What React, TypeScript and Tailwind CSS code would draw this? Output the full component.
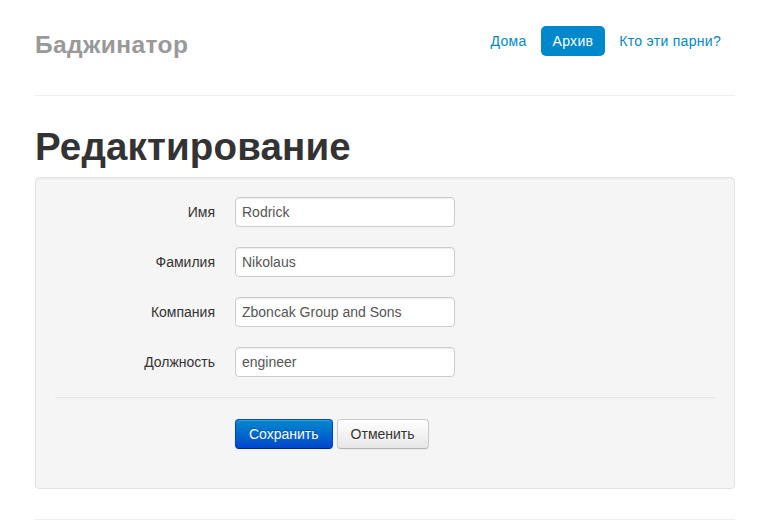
const fields = [
  { label: 'Имя', value: 'Rodrick' },
  { label: 'Фамилия', value: 'Nikolaus' },
  { label: 'Компания', value: 'Zboncak Group and Sons' },
  { label: 'Должность', value: 'engineer' },
];

export default function App() {
  return (
    <div className="min-h-[529px] bg-white text-[14px] leading-[20px] text-[#333] [font-family:'Liberation_Sans',Arial,sans-serif]">
      <div className="ml-[35px] w-[700px] pt-[25px]">
        {/* Masthead */}
        <div className="flex items-start justify-between">
          <h3 className="text-[24.5px] font-bold leading-[40px] tracking-[0.4px] text-[#999]">Баджинатор</h3>
          <ul className="mt-px flex tracking-[0.3px]">
            <li className="mr-[2px]">
              <a href="#" className="block rounded-[5px] px-3 py-2 leading-[14px] text-[#0088cc]">Дома</a>
            </li>
            <li className="mr-[2px]">
              <a href="#" className="block rounded-[5px] bg-[#0088cc] px-3 py-2 leading-[14px] text-white">Архив</a>
            </li>
            <li className="mr-[2px]">
              <a href="#" className="block rounded-[5px] px-3 py-2 leading-[14px] text-[#0088cc]">Кто эти парни?</a>
            </li>
          </ul>
        </div>

        <hr className="mt-[30px] border-0 border-t border-b border-t-[#eee] border-b-white" />

        <h1 className="mt-[30px] text-[38.5px] font-bold leading-[40px] tracking-[0.15px] text-[#333]">Редактирование</h1>

        {/* Form well */}
        <div className="mt-[10px] rounded-[4px] border border-[#e3e3e3] bg-[#f5f5f5] p-[19px] shadow-[inset_0_1px_1px_rgba(0,0,0,0.05)]">
          <form className="flex flex-col">
            {fields.map((f) => (
              <div key={f.label} className="mb-5 flex items-center">
                <label className="w-[160px] text-right">{f.label}</label>
                <input
                  type="text"
                  defaultValue={f.value}
                  className="ml-5 h-[30px] w-[220px] rounded-[4px] border border-[#ccc] bg-white px-[6px] py-1 text-[14px] text-[#555] shadow-[inset_0_1px_1px_rgba(0,0,0,0.075)] outline-none"
                />
              </div>
            ))}
            <div className="flex gap-1 border-t border-[#e5e5e5] pt-[21px] pb-5 pl-[180px]">
              <button
                type="button"
                className="h-[30px] rounded-[4px] border border-[#0044cc] border-b-[#002a80] bg-gradient-to-b from-[#0088cc] to-[#0044cc] px-[13px] text-white [text-shadow:0_-1px_0_rgba(0,0,0,0.25)] shadow-[inset_0_1px_0_rgba(255,255,255,0.2),0_1px_2px_rgba(0,0,0,0.05)]"
              >
                Сохранить
              </button>
              <button
                type="button"
                className="h-[30px] rounded-[4px] border border-[#ccc] border-b-[#b3b3b3] bg-gradient-to-b from-white to-[#e6e6e6] px-[13px] text-[#333] [text-shadow:0_1px_1px_rgba(255,255,255,0.75)] shadow-[inset_0_1px_0_rgba(255,255,255,0.2),0_1px_2px_rgba(0,0,0,0.05)]"
              >
                Отменить
              </button>
            </div>
          </form>
        </div>

        <hr className="mt-[30px] border-0 border-t border-b border-t-[#eee] border-b-white" />
      </div>
    </div>
  );
}
